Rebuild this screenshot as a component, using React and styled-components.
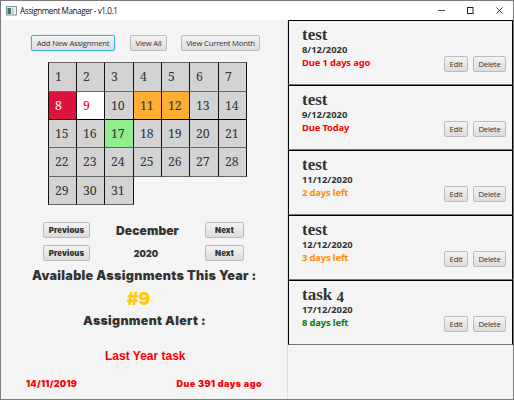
import React from "react";
import styled, { createGlobalStyle } from "styled-components";

const Global = createGlobalStyle`
  * { box-sizing: border-box; }
  body { margin: 0; background: #f4f4f4; overflow: hidden; }
`;

const Window = styled.div`
  width: 514px;
  height: 400px;
  border: 1px solid #7c7c7c;
  display: flex;
  flex-direction: column;
  background: #f4f4f4;
  color: #333;
  font-family: "Open Sans", "Noto Sans", sans-serif;
`;

const TitleBar = styled.header`
  flex: 0 0 19px;
  display: flex;
  align-items: center;
  padding: 0 10px 0 5px;
  background: #fff;
`;

const Title = styled.div`
  flex: 1;
  padding-left: 3px;
  font: 8.1px/18px "Open Sans", sans-serif;
  letter-spacing: -0.42px;
  color: #111;
  white-space: pre;
`;

const Controls = styled.div`
  display: flex;
  gap: 22px;
`;

const Body = styled.main`
  flex: 1;
  display: grid;
  grid-template-columns: 287px 225px;
`;

const Left = styled.section`
  display: flex;
  flex-direction: column;
  border-right: 1px solid #dcdcdc;
`;

const ButtonBar = styled.div`
  display: flex;
  padding: 15px 0 0 30px;
`;

const Button = styled.button`
  width: ${(p) => p.$w}px;
  height: 16px;
  margin: 0 ${(p) => p.$gap || 0}px 0 0;
  padding: 0;
  display: flex;
  justify-content: center;
  border: 1px solid ${(p) => (p.$focus ? "#3fb1d6" : "#bcbcbc")};
  border-radius: 2px;
  box-shadow: ${(p) => (p.$focus ? "0 0 1px #3fb1d6" : "none")};
  background: linear-gradient(#f3f3f3, #dcdcdc);
  color: #333;
  font: ${(p) => (p.$heavy ? '900 7.8px/14px "Inter"' : '7.7px/15px "Open Sans"')}, sans-serif;
  letter-spacing: ${(p) => (p.$heavy ? 0.1 : -0.2)}px;
  white-space: nowrap;
`;

const Calendar = styled.div`
  display: grid;
  grid-template-columns: 28px 28px 29px 28px 28px 29px 28px;
  grid-template-rows: 29px 28px 28px 29px 28px;
  margin: 11px 0 0 47px;
`;

const fills = {
  late: ["#dc143c", "#fff"],
  today: ["#fff", "#f00"],
  soon: ["#ffad33", "#333"],
  later: ["#90ee90", "#333"],
  plain: ["#d3d3d3", "#333"],
};

const Day = styled.div`
  margin: 0 -1px -1px 0;
  padding: 0 0 0 6px;
  border: 1px solid #111;
  border-top-color: ${(p) => (p.$dark ? "#000" : "#666")};
  border-bottom-color: #666;
  background: ${(p) => fills[p.$kind][0]};
  color: ${(p) => fills[p.$kind][1]};
  font: 12.3px/28px "Noto Serif", "Liberation Serif", serif;
`;

const Stepper = styled.div`
  display: grid;
  grid-template-columns: 47px 115px 39px;
  align-items: center;
  height: 16px;
  margin: ${(p) => p.$top}px 0 0 42px;
`;

const Period = styled.div`
  text-align: center;
  height: 16px;
  padding-right: ${(p) => p.$shift}px;
  font: 900 ${(p) => p.$size}px/17px "Inter", sans-serif;
  letter-spacing: ${(p) => p.$ls}px;
`;

const Heading = styled.div`
  height: ${(p) => p.$h}px;
  margin: ${(p) => p.$top}px 0 0 ${(p) => p.$x}px;
  font: 900 ${(p) => p.$size}px/${(p) => p.$h}px "Inter", sans-serif;
  letter-spacing: ${(p) => p.$ls || 0}px;
  color: ${(p) => p.$color || "#333"};
  white-space: nowrap;
`;

const AlertName = styled.div`
  margin: 18px 0 0 104px;
  font: bold 12px/16px "Liberation Sans", sans-serif;
  color: #f00;
`;

const AlertFooter = styled.div`
  display: flex;
  justify-content: space-between;
  margin: 13px 25px 0 25px;
  font: 900 9px/14px "Inter", sans-serif;
  color: #f00;
`;

const FooterText = styled.span`
  letter-spacing: ${(p) => p.$ls}px;
`;

const List = styled.section`
  display: flex;
  flex-direction: column;
`;

const Card = styled.article`
  height: 65px;
  display: flex;
  justify-content: space-between;
  border: 1px solid #000;
  border-bottom-color: #777;
  padding: 5px 6px 0 13px;
`;

const CardName = styled.div`
  font: bold 17px/18px "Liberation Serif", serif;
  height: 17px;
  white-space: pre;
`;

/* Drops a numeral below the baseline, as old-style figures do. */
const OldStyleFigure = styled.span`
  display: inline-block;
  line-height: 12px;
  font-size: 15px;
  transform: translateY(2px);
`;

const CardLine = styled.div`
  font: bold 9.4px/13px "Noto Sans", sans-serif;
  letter-spacing: ${(p) => p.$ls || 0}px;
  color: ${(p) => p.$color || "#333"};
`;

const Actions = styled.div`
  display: flex;
  padding-top: 30px;
`;

const days = Array.from({ length: 31 }, (_, i) => i + 1);
const marked = { 8: "late", 9: "today", 11: "soon", 12: "soon", 17: "later" };

const tasks = [
  ["test", "8/12/2020", "Due 1 days ago", "#f00"],
  ["test", "9/12/2020", "Due Today", "#f00"],
  ["test", "11/12/2020", "2 days left", "#ff8c00"],
  ["test", "12/12/2020", "3 days left", "#ff8c00"],
  ["task 4", "17/12/2020", "8 days left", "#008000"],
];

function AppIcon() {
  return (
    <svg width="11" height="10" viewBox="0 0 11 10">
      <rect x="0.5" y="0.5" width="10" height="8.5" fill="#e9eef0" stroke="#8b9499" />
      <rect x="1.5" y="2" width="3.5" height="6" fill="#37796f" />
      <rect x="6" y="2" width="1.5" height="6" fill="#b5c5cc" />
    </svg>
  );
}

export default function App() {
  return (
    <>
      <Global />
      <Window>
        <TitleBar>
          <AppIcon />
          <Title>Assignment Manager - v1.0.1</Title>
          <Controls>
            <svg width="7" height="7"><path d="M0 3.5H7" stroke="#555" /></svg>
            <svg width="7" height="7"><rect x=".5" y=".5" width="5.5" height="6" fill="none" stroke="#222" /></svg>
            <svg width="7" height="7"><path d="M.5.5l6 6M6.5.5l-6 6" stroke="#222" strokeWidth=".9" /></svg>
          </Controls>
        </TitleBar>
        <Body>
          <Left>
            <ButtonBar>
              <Button $w={84} $gap={15} $focus>Add New Assignment</Button>
              <Button $w={37} $gap={14}>View All</Button>
              <Button $w={79}>View Current Month</Button>
            </ButtonBar>
            <Calendar>
              {days.map((d) => (
                <Day key={d} $kind={marked[d] || "plain"} $dark={d > 14 && d < 22}>{d}</Day>
              ))}
            </Calendar>
            <Stepper $top={18}>
              <Button $w={47} $heavy>Previous</Button>
              <Period $size={12} $ls={0.1} $shift={0}>December</Period>
              <Button $w={39} $heavy>Next</Button>
            </Stepper>
            <Stepper $top={7}>
              <Button $w={47} $heavy>Previous</Button>
              <Period $size={9} $ls={0} $shift={3}>2020</Period>
              <Button $w={39} $heavy>Next</Button>
            </Stepper>
            <Heading $top={6} $x={31} $size={12.6} $ls={0.29} $h={18}>Available Assignments This Year :</Heading>
            <Heading $top={3} $x={126} $size={17.5} $h={22} $color="#ffcc00">#9</Heading>
            <Heading $top={2} $x={82} $size={12.4} $ls={0.32} $h={18}>Assignment Alert :</Heading>
            <AlertName>Last Year task</AlertName>
            <AlertFooter>
              <FooterText $ls={0.28}>14/11/2019</FooterText>
              <FooterText $ls={0.45}>Due 391 days ago</FooterText>
            </AlertFooter>
          </Left>
          <List>
            {tasks.map(([name, date, due, color]) => (
              <Card key={date}>
                <div>
                  <CardName>
                    {name.split(/(\d)/).map((part, i) =>
                      i % 2 ? <OldStyleFigure key={i}>{part}</OldStyleFigure> : part
                    )}
                  </CardName>
                  <CardLine $ls={0}>{date}</CardLine>
                  <CardLine $ls={-0.15} $color={color}>{due}</CardLine>
                </div>
                <Actions>
                  <Button $w={24} $gap={5}>Edit</Button>
                  <Button $w={33}>Delete</Button>
                </Actions>
              </Card>
            ))}
          </List>
        </Body>
      </Window>
    </>
  );
}
